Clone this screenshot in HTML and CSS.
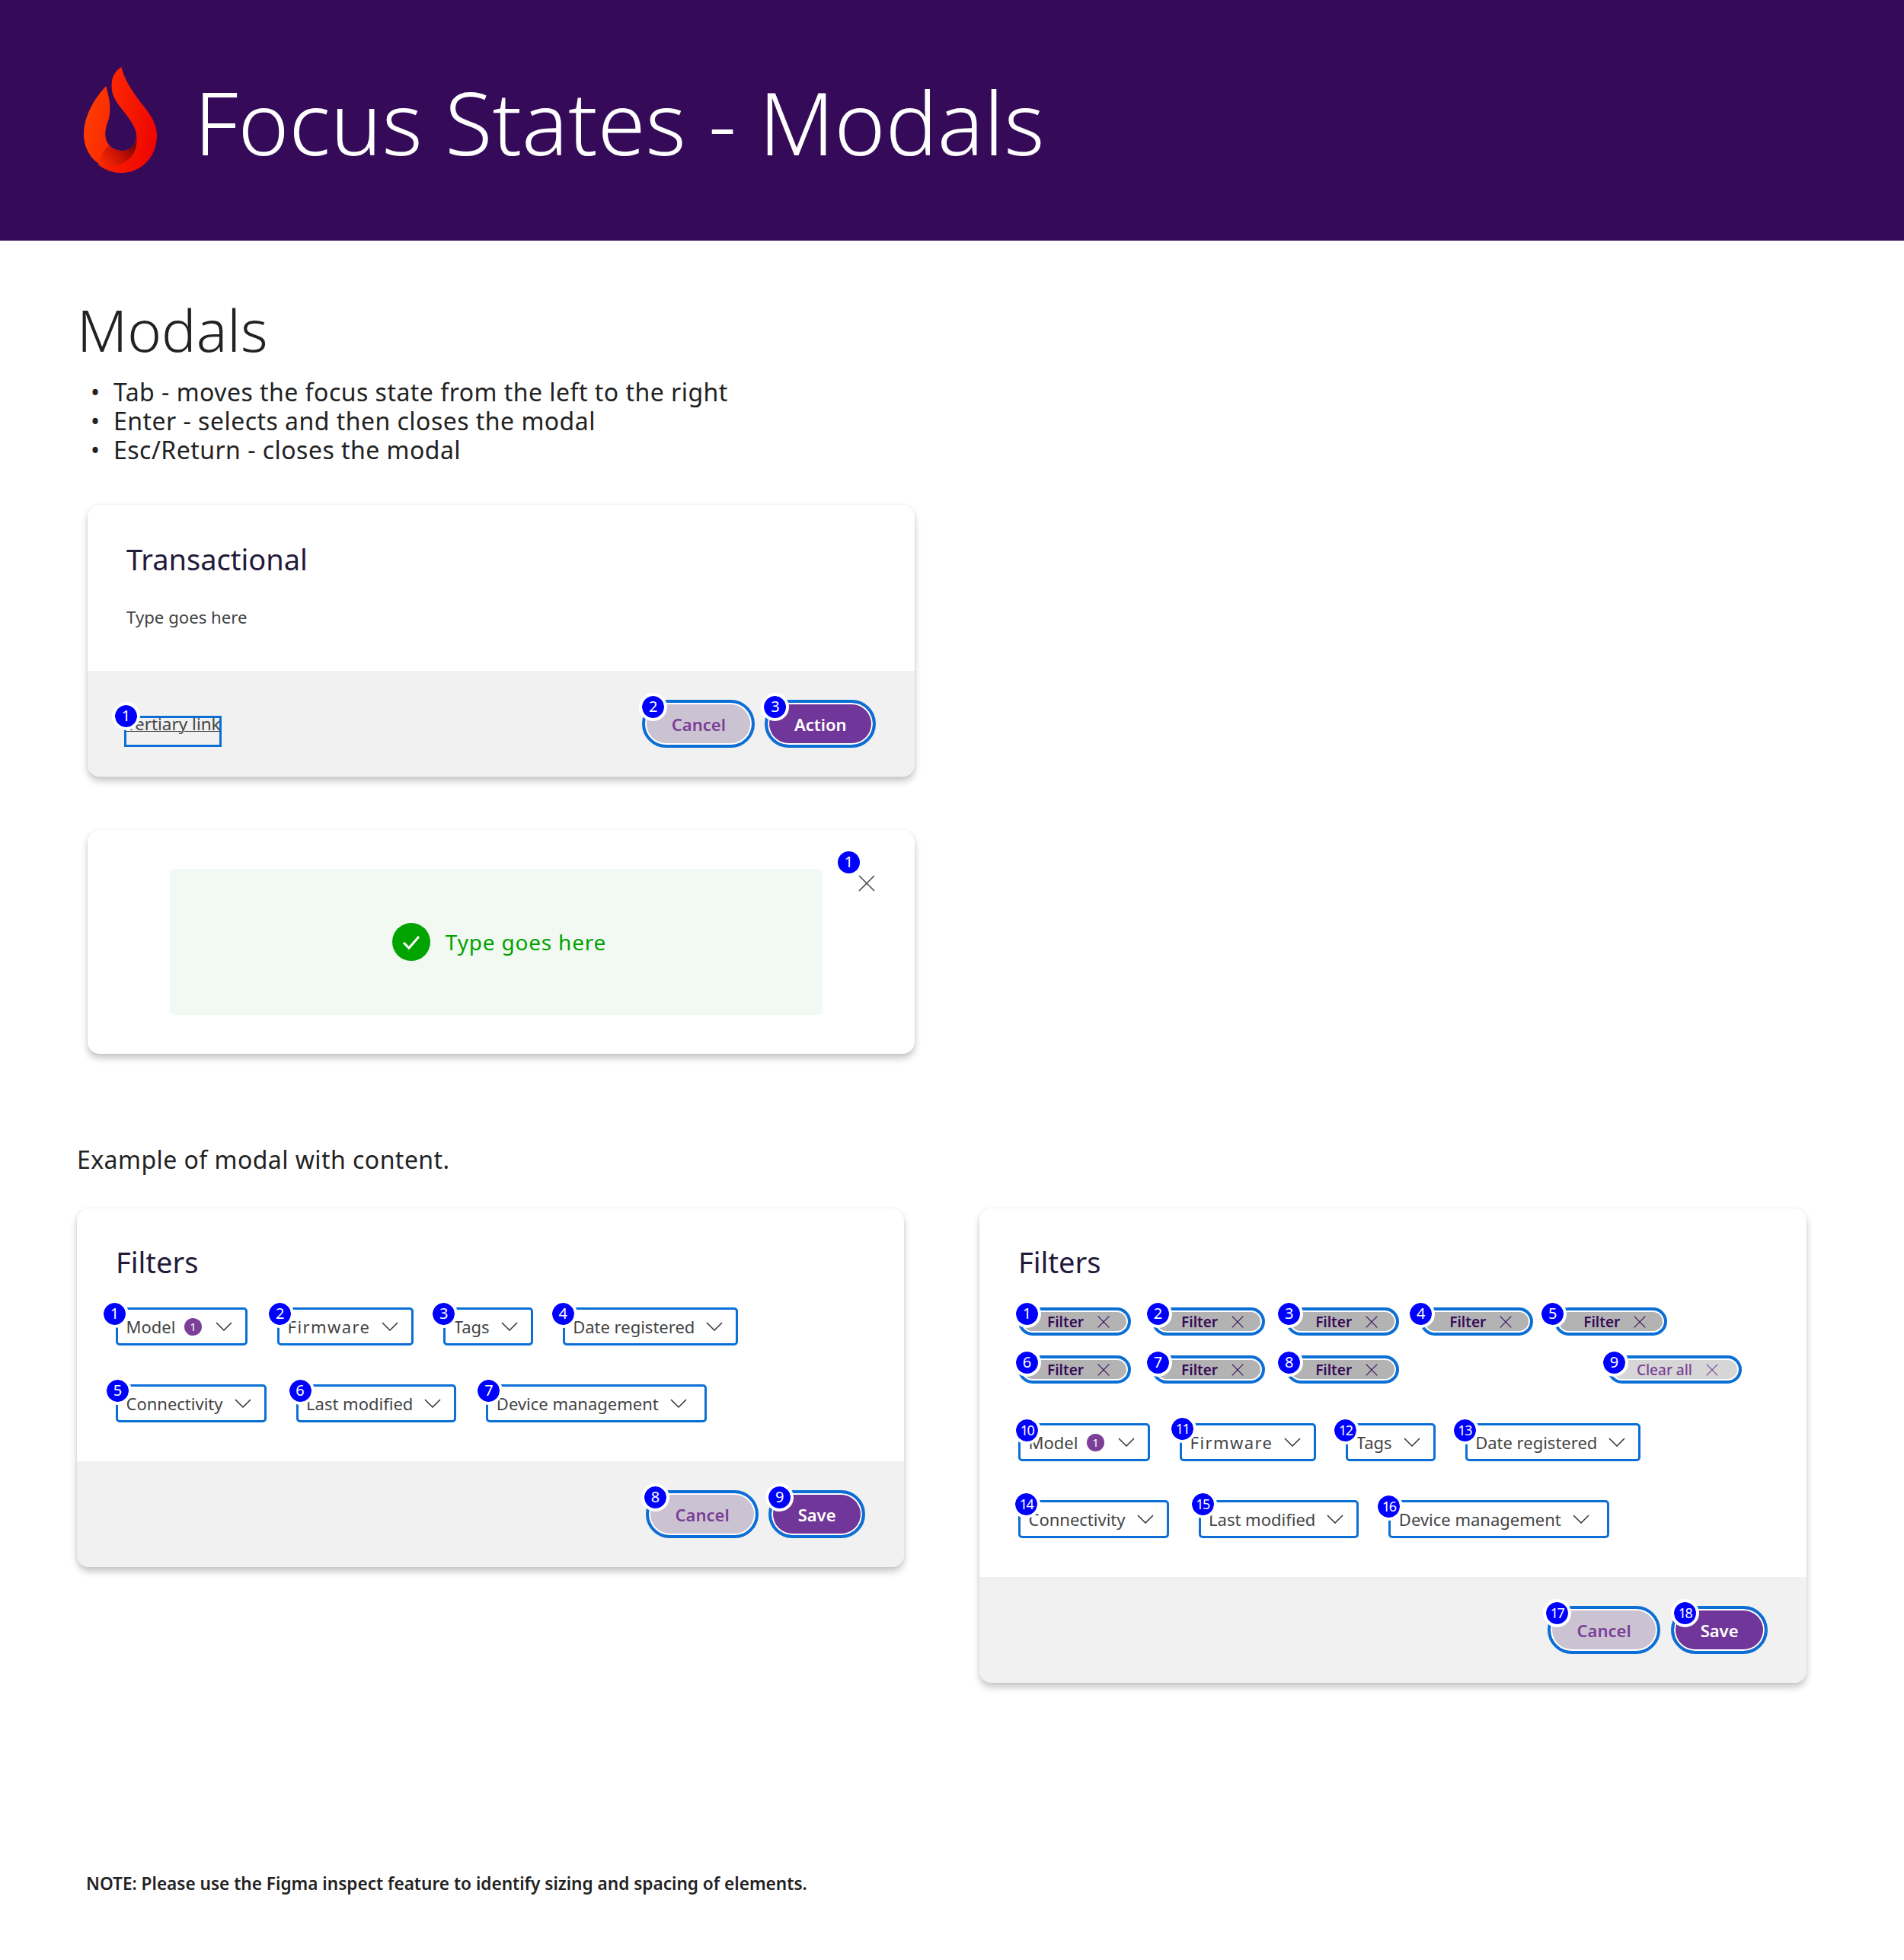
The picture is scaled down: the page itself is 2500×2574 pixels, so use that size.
FILE: index.html
```html
<!DOCTYPE html>
<html lang="en">
<head>
    <meta charset="UTF-8">
    <title>Focus States - Modals</title>
    <link rel="stylesheet" href="styles.css">
</head>
<body>
    <svg class="icon-defs" width="0" height="0" aria-hidden="true">
        <defs>
            <symbol id="x" viewBox="0 0 22 22"><path d="M1 1 21 21M21 1 1 21"/></symbol>
            <symbol id="chevron" viewBox="0 0 22 12"><path d="M1 1 11 11 21 1"/></symbol>
        </defs>
    </svg>

    <header class="header">
        <svg class="logo" viewBox="150 115 288 417">
            <defs>
                <linearGradient id="flameLeft" x1="0" y1="0" x2="1" y2="0.4">
                    <stop offset="0" stop-color="#ff4200"/>
                    <stop offset="1" stop-color="#fa2400"/>
                </linearGradient>
                <linearGradient id="flameRight" x1="0" y1="0.2" x2="1" y2="0.6">
                    <stop offset="0" stop-color="#ff2e00"/>
                    <stop offset="1" stop-color="#ee0600"/>
                </linearGradient>
                <linearGradient id="flameShade" x1="0.05" y1="0.9" x2="1" y2="0.3">
                    <stop offset="0" stop-color="#fa2a00"/>
                    <stop offset="0.55" stop-color="#c41006"/>
                    <stop offset="1" stop-color="#6e0309"/>
                </linearGradient>
            </defs>
            <path fill="url(#flameRight)" d="M298 115C310 165 340 210 380 262C415 305 438 340 438 385C438 470 375 532 300 532C265 532 235 522 205 498L340 440L358 395C358 350 330 320 290 268C265 235 258 210 260 180C262 150 275 130 298 115Z"/>
            <path fill="url(#flameLeft)" d="M238 190C190 240 150 310 150 380C150 440 185 490 230 506L300 470V445C265 445 235 420 235 380C235 365 238 345 248 322C262 265 245 225 238 190Z"/>
            <path fill="url(#flameShade)" d="M358 392C358 420 330 445 298 445C280 445 262 438 248 425C225 445 215 475 207 494C220 503 235 507 250 507C310 507 365 465 358 392Z"/>
        </svg>
        <h1 class="header-title">Focus States - Modals</h1>
    </header>

    <main class="page">
        <h2 class="section-title">Modals</h2>
        <ul class="notes">
            <li>Tab - moves the focus state from the left to the right</li>
            <li>Enter - selects and then closes the modal</li>
            <li>Esc/Return - closes the modal</li>
        </ul>

        <section class="modal modal-small">
            <div class="modal-body modal-body-text">
                <h3 class="modal-title">Transactional</h3>
                <p class="modal-text">Type goes here</p>
            </div>
            <div class="modal-footer">
                <a class="tertiary">Tertiary link<span class="badge bx-4 top-21">1</span></a>
                <button class="pill pill-light">Cancel<span class="badge bx-15">2</span></button>
                <button class="pill pill-dark">Action<span class="badge bx-14">3</span></button>
            </div>
        </section>

        <section class="modal modal-small modal-alert">
            <div class="alert">
                <svg class="alert-icon" viewBox="0 0 50 50">
                    <circle cx="25" cy="25" r="25"/>
                    <path d="M15 26 22 33 35 18"/>
                </svg>
                <span>Type goes here</span>
            </div>
            <div class="close">
                <svg class="icon-x icon-close"><use href="#x"/></svg>
                <span class="badge close-badge">1</span>
            </div>
        </section>

        <p class="example-label">Example of modal with content.</p>

        <div class="examples">
            <section class="modal">
                <div class="modal-body">
                    <h3 class="modal-title">Filters</h3>
                    <div class="dropdowns">
                        <button class="dropdown">Model <span class="count">1</span><svg class="chevron"><use href="#chevron"/></svg><span class="badge bx-0">1</span></button>
                        <button class="dropdown"><span class="spaced">Firmware</span><svg class="chevron"><use href="#chevron"/></svg><span class="badge bx-5">2</span></button>
                        <button class="dropdown">Tags<svg class="chevron"><use href="#chevron"/></svg><span class="badge bx-2">3</span></button>
                        <button class="dropdown">Date registered<svg class="chevron"><use href="#chevron"/></svg><span class="badge bx-2">4</span></button>
                    </div>
                    <div class="dropdowns">
                        <button class="dropdown">Connectivity<svg class="chevron"><use href="#chevron"/></svg><span class="badge bx-4">5</span></button>
                        <button class="dropdown">Last modified<svg class="chevron"><use href="#chevron"/></svg><span class="badge bx-7">6</span></button>
                        <button class="dropdown dropdown-roomy">Device management<svg class="chevron"><use href="#chevron"/></svg><span class="badge bx-5">7</span></button>
                    </div>
                </div>
                <div class="modal-footer">
                    <button class="pill pill-light first-action">Cancel<span class="badge bx-13">8</span></button>
                    <button class="pill pill-dark">Save<span class="badge bx-15">9</span></button>
                </div>
            </section>

            <section class="modal">
                <div class="modal-body">
                    <h3 class="modal-title">Filters</h3>
                    <div class="chips">
                        <span class="chip">Filter<svg class="icon-x"><use href="#x"/></svg><span class="badge bx-12 top-14">1</span></span>
                        <span class="chip">Filter<svg class="icon-x"><use href="#x"/></svg><span class="badge bx-8 top-14">2</span></span>
                        <span class="chip">Filter<svg class="icon-x"><use href="#x"/></svg><span class="badge bx-4 top-14">3</span></span>
                        <span class="chip">Filter<svg class="icon-x"><use href="#x"/></svg><span class="badge bx-1 top-14">4</span></span>
                        <span class="chip">Filter<svg class="icon-x"><use href="#x"/></svg><span class="badge bx-n2 top-14">5</span></span>
                    </div>
                    <div class="chips">
                        <span class="chip">Filter<svg class="icon-x"><use href="#x"/></svg><span class="badge bx-12">6</span></span>
                        <span class="chip">Filter<svg class="icon-x"><use href="#x"/></svg><span class="badge bx-8">7</span></span>
                        <span class="chip">Filter<svg class="icon-x"><use href="#x"/></svg><span class="badge bx-4">8</span></span>
                        <span class="chip chip-clear">Clear all<svg class="icon-x"><use href="#x"/></svg><span class="badge bx-9">9</span></span>
                    </div>
                    <div class="dropdowns dropdowns-after-chips">
                        <button class="dropdown">Model <span class="count">1</span><svg class="chevron"><use href="#chevron"/></svg><span class="badge badge-wide bx-13 top-12">10</span></button>
                        <button class="dropdown"><span class="spaced">Firmware</span><svg class="chevron"><use href="#chevron"/></svg><span class="badge badge-wide bx-5 top-14">11</span></button>
                        <button class="dropdown">Tags<svg class="chevron"><use href="#chevron"/></svg><span class="badge badge-wide bx-1 top-12">12</span></button>
                        <button class="dropdown">Date registered<svg class="chevron"><use href="#chevron"/></svg><span class="badge badge-wide bx-1 top-12">13</span></button>
                    </div>
                    <div class="dropdowns">
                        <button class="dropdown">Connectivity<svg class="chevron"><use href="#chevron"/></svg><span class="badge badge-wide bx-12 top-16">14</span></button>
                        <button class="dropdown">Last modified<svg class="chevron"><use href="#chevron"/></svg><span class="badge badge-wide bx-7 top-16">15</span></button>
                        <button class="dropdown dropdown-roomy">Device management<svg class="chevron"><use href="#chevron"/></svg><span class="badge badge-wide bx-2">16</span></button>
                    </div>
                </div>
                <div class="modal-footer">
                    <button class="pill pill-light wide-gap">Cancel<span class="badge badge-wide bx-13">17</span></button>
                    <button class="pill pill-dark">Save<span class="badge badge-wide bx-19">18</span></button>
                </div>
            </section>
        </div>

        <p class="footnote">NOTE: Please use the Figma inspect feature to identify sizing and spacing of elements.</p>
    </main>
</body>
</html>
```

FILE: styles.css
```css
body {
    margin: 0;
    background-color: #fff;
    font-family: "Noto Sans", sans-serif;
    color: #222;
}

.icon-defs {
    position: absolute;
}

.header {
    display: flex;
    align-items: center;
    height: 316px;
    padding-left: 110px;
    background-color: #350b59;
}

.logo {
    width: 96px;
    height: 139px;
    margin-top: -1px;
}

.header-title {
    margin: 3px 0 0 49px;
    font-size: 113.7px;
    font-weight: 300;
    line-height: 1;
    color: #fff;
}

.page {
    padding: 69px 0 60px 101px;
}

.section-title {
    margin: 0;
    font-size: 76px;
    font-weight: 300;
    line-height: 96px;
}

.notes {
    margin: 15px 0 54px;
    padding-left: 48px;
    font-size: 32px;
    line-height: 37.8px;
    letter-spacing: 0.47px;
}

.notes li::marker {
    content: "•  ";
}

.modal {
    width: 1086px;
    box-sizing: border-box;
    border-radius: 16px;
    background-color: #fff;
    box-shadow: 0 6px 10px rgba(0, 0, 0, 0.22), 0 0 4px rgba(0, 0, 0, 0.06);
    overflow: hidden;
}

.modal-small {
    margin-left: 14px;
}

.modal-body {
    padding: 45px 85px 51px 51px;
}

.modal-body-text {
    height: 218px;
    box-sizing: border-box;
    padding-top: 46px;
}

.modal-title {
    margin: 0;
    font-size: 38px;
    font-weight: 400;
    line-height: 50px;
    color: #231a3a;
}

.modal-text {
    margin: 37px 0 0;
    font-size: 22.2px;
    line-height: 30px;
    color: #444;
}

.modal-footer {
    display: flex;
    align-items: center;
    gap: 13px;
    height: 139px;
    padding: 0 51px 0 48px;
    background-color: #f1f1f1;
}

.modal-alert {
    display: flex;
    margin-top: 70px;
    padding: 51px 52px 51px 108px;
    overflow: visible;
}

.alert {
    display: flex;
    flex: none;
    align-items: center;
    justify-content: center;
    gap: 20px;
    width: 857px;
    height: 192px;
    box-sizing: border-box;
    padding-left: 8px;
    border-radius: 6px;
    background-color: #f2f8f2;
    font-size: 28px;
    letter-spacing: 0.8px;
    color: #00a300;
}

.alert-icon {
    width: 50px;
    height: 50px;
    fill: #00a300;
}

.alert-icon path {
    fill: none;
    stroke: #fff;
    stroke-width: 3;
}

.close {
    position: relative;
    margin: 8px 0 0 47px;
}

.example-label {
    margin: 119px 0 44px;
    font-size: 32px;
    line-height: 40px;
    letter-spacing: 0.45px;
}

.examples {
    display: flex;
    align-items: flex-start;
    gap: 99px;
}

.dropdowns {
    display: flex;
    gap: 39px;
    margin-top: 51px;
}

.modal-title + .dropdowns,
.modal-title + .chips {
    margin-top: 35px;
}

.dropdowns-after-chips {
    margin-top: 52px;
}

.dropdown {
    position: relative;
    display: flex;
    align-items: center;
    height: 50px;
    box-sizing: border-box;
    padding: 0 17px 0 10.5px;
    border: 3px solid #0b6fd6;
    border-radius: 5px;
    background-color: #fff;
    font-family: inherit;
    font-size: 22px;
    color: #444;
    white-space: pre;
}

.dropdown-roomy {
    padding-right: 23px;
}

.spaced {
    letter-spacing: 1.4px;
}

.chevron {
    width: 22px;
    height: 12px;
    margin-left: 15px;
    fill: none;
    stroke: #333;
    stroke-width: 1.5;
}

.count {
    display: block;
    width: 23px;
    height: 23px;
    margin-left: 6px;
    border-radius: 50%;
    background-color: #7b3f98;
    font-size: 15px;
    line-height: 23px;
    text-align: center;
    color: #fff;
}

.count + .chevron {
    margin-left: 18px;
}

.chips {
    display: flex;
    gap: 28px;
    margin-top: 26px;
}

.chip {
    position: relative;
    display: flex;
    align-items: center;
    gap: 18px;
    height: 37px;
    box-sizing: border-box;
    padding: 0 24px 0 34px;
    border: 4px solid #0b6fd6;
    border-radius: 19px;
    background-color: #b3b3b3;
    box-shadow: inset 0 0 0 2px #fff;
    font-size: 19px;
    font-weight: 600;
    color: #350b59;
}

.chip-clear {
    margin-left: auto;
    padding-right: 27px;
    background-color: #d6d6d6;
    font-weight: 500;
    color: #7b3f98;
}

.icon-x {
    width: 16px;
    height: 16px;
    fill: none;
    stroke: currentColor;
    stroke-width: 1.5;
}

.icon-close {
    display: block;
    width: 22px;
    height: 22px;
    color: #444;
}

.pill {
    position: relative;
    height: 63px;
    box-sizing: border-box;
    padding: 0 34.5px;
    border: 4px solid #0b6fd6;
    border-radius: 32px;
    box-shadow: inset 0 0 0 2px #fff;
    font-family: inherit;
    font-size: 22px;
    font-weight: 600;
}

.pill-light {
    background-color: #ccc3d2;
    color: #7b3f98;
}

.pill-dark {
    background-color: #713699;
    color: #fff;
}

.first-action {
    margin-left: auto;
}

.wide-gap {
    margin-left: auto;
    margin-right: 1px;
}

.tertiary {
    position: relative;
    width: 128px;
    height: 41px;
    box-sizing: border-box;
    margin-top: 20px;
    margin-right: auto;
    border: 3px solid #0b6fd6;
    font-size: 22.5px;
    line-height: 16px;
    color: #444;
    text-decoration: underline;
    text-decoration-thickness: 1px;
    white-space: nowrap;
}

/* numbered focus order markers */
.badge {
    position: absolute;
    top: -13px;
    left: -19px;
    display: block;
    width: 29px;
    height: 29px;
    box-sizing: content-box;
    border: 4.5px solid #fff;
    border-radius: 50%;
    background-color: #00f;
    background-clip: padding-box;
    font-family: "Noto Sans", sans-serif;
    font-size: 20px;
    font-weight: 400;
    line-height: 28px;
    letter-spacing: 0;
    text-align: center;
    color: #fff;
    text-decoration: none;
}

.badge-wide {
    font-size: 18px;
    letter-spacing: -1.5px;
}

.close-badge {
    top: -35px;
    left: -31px;
    border-color: transparent;
}

.bx-n2 { left: -25px; }
.bx-0 { left: -23px; }
.bx-1 { left: -22px; }
.bx-2 { left: -21px; }
.bx-4 { left: -19px; }
.bx-5 { left: -18px; }
.bx-7 { left: -16px; }
.bx-8 { left: -15px; }
.bx-9 { left: -14px; }
.bx-12 { left: -11px; }
.bx-13 { left: -10px; }
.bx-14 { left: -9px; }
.bx-15 { left: -8px; }
.bx-19 { left: -4px; }

.top-12 { top: -12px; }
.top-14 { top: -14px; }
.top-16 { top: -16px; }
.top-21 { top: -21px; }

.footnote {
    margin: 247px 0 0 12px;
    font-size: 22.6px;
    font-weight: 600;
    line-height: 34px;
}
```
